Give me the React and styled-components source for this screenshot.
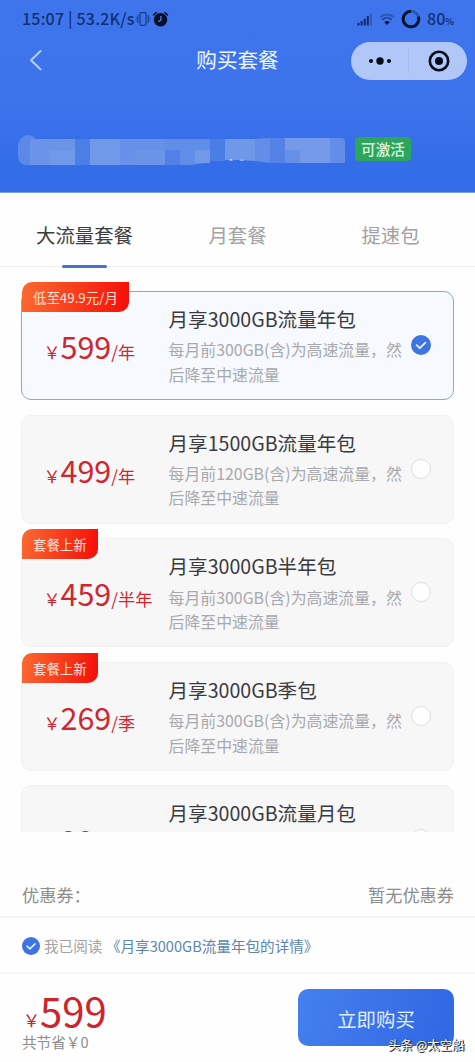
import React from "react";
import styled, { createGlobalStyle } from "styled-components";

const Global = createGlobalStyle`
  * { box-sizing: border-box; }
  body {
    margin: 0;
    background: #fefefe;
    font-family: "Noto Sans CJK SC", "Noto Sans", sans-serif;
  }
`;

const Page = styled.div`
  width: 475px;
  height: 1062px;
  overflow: hidden;
  display: flex;
  flex-direction: column;
  background: #fefefe;
`;

const Header = styled.header`
  height: 193px;
  flex: none;
  display: flex;
  flex-direction: column;
  background: linear-gradient(180deg, #3e75ec 0%, #3d74eb 50%, #346de8 85%, #336ce6 100%);
  border-bottom: 1px solid #7b9eea;
`;

const StatusBar = styled.div`
  height: 38px;
  padding: 0 21px 0 22px;
  display: flex;
  align-items: center;
  justify-content: space-between;
  color: #112f72;
`;

const StatusGroup = styled.div`
  display: flex;
  align-items: center;
  gap: ${(p) => p.$gap || 0}px;
`;

const StatusText = styled.span`
  font-size: 16px;
  font-weight: 500;
  line-height: 20px;
  margin-top: ${(p) => p.$lift || 0}px;
  letter-spacing: ${(p) => p.$track || 0}px;
  white-space: pre;
`;

const Percent = styled.small`
  font-size: 9px;
  font-weight: 700;
`;

const NavBar = styled.div`
  height: 45px;
  padding: 0 8px 0 28px;
  display: grid;
  grid-template-columns: 116px 1fr 116px;
  align-items: center;
`;

const NavTitle = styled.h1`
  margin: -3px 0 0 -20px;
  text-align: center;
  font-size: 20.6px;
  font-weight: 400;
  line-height: 30px;
  color: #f0f6ff;
`;

const Capsule = styled.div`
  width: 116px;
  height: 38px;
  border-radius: 19px;
  background: #b1c7f7;
  display: flex;
  align-items: center;
`;

const CapsuleHalf = styled.div`
  flex: 1;
  display: flex;
  justify-content: center;
  padding-left: ${(p) => p.$shift || 0}px;
`;

const CapsuleRule = styled.div`
  width: 1px;
  height: 25px;
  background: #a5bbee;
`;

const Account = styled.div`
  flex: 1;
  display: flex;
  align-items: flex-start;
  padding: 52px 0 0 17px;
`;

const StateTag = styled.span`
  margin: 2px 0 0 9px;
  width: 56px;
  height: 24px;
  border-radius: 4px;
  background: #2da65b;
  color: #d9f5e2;
  font-size: 14.6px;
  font-weight: 500;
  line-height: 24px;
  text-align: center;
`;

const Tabs = styled.nav`
  height: 74px;
  flex: none;
  padding: 0 8px;
  display: grid;
  grid-template-columns: repeat(3, 1fr);
  border-bottom: 1px solid #efefef;
`;

const Tab = styled.div`
  display: flex;
  flex-direction: column;
  align-items: center;
  justify-content: space-between;
  padding-top: 27px;
  font-size: 19.4px;
  line-height: 30px;
  color: ${(p) => (p.$active ? "#3c3c3c" : "#a2a2a2")};
  &::after {
    content: "";
    width: 45px;
    height: 3px;
    margin-bottom: -2px;
    border-radius: 2px;
    background: ${(p) => (p.$active ? "#4772c8" : "transparent")};
  }
`;

const PlanList = styled.main`
  height: 565px;
  flex: none;
  overflow: hidden;
  padding: 24px 21px 0 21px;
  display: flex;
  flex-direction: column;
  gap: 14.6px;
`;

const PlanCard = styled.section`
  position: relative;
  height: 109px;
  flex: none;
  border-radius: 10px;
  border: 1px solid ${(p) => (p.$selected ? "#8ba9ca" : "#f1f1f1")};
  background: ${(p) => (p.$selected ? "#f6f9fe" : "#f7f7f7")};
  display: grid;
  grid-template-columns: 146.5px 236px 1fr;
`;

const Ribbon = styled.span`
  position: absolute;
  top: -10px;
  left: 0;
  height: 30px;
  padding: 0 11px;
  border-radius: 10px 0 10px 0;
  background: linear-gradient(100deg, #fb6a31 0%, #f93c1c 50%, #f50c08 100%);
  color: #ffe3d8;
  font-size: 13.4px;
  line-height: 30px;
  white-space: nowrap;
`;

const Price = styled.div`
  display: flex;
  align-items: baseline;
  height: 44px;
  margin-top: 32px;
  padding-left: 21.5px;
  line-height: 44px;
  white-space: nowrap;
  color: #cf2731;
`;

const Currency = styled.span`
  font-size: 17px;
`;

const Amount = styled.span`
  font-size: ${(p) => p.$size || 30.5}px;
`;

const Period = styled.span`
  font-size: 17.2px;
`;

const Details = styled.div`
  padding-top: 12px;
`;

const PlanName = styled.h2`
  margin: 0;
  font-size: 19.6px;
  font-weight: 400;
  line-height: 30px;
  color: #3a3b3e;
  white-space: nowrap;
`;

const PlanNote = styled.p`
  margin: 4.4px 0 0;
  font-size: 15.9px;
  line-height: 24.5px;
  color: #a7a9ad;
`;

const Choice = styled.div`
  padding: 43px 0 0 6.5px;
  line-height: 0;
`;

const EmptyRadio = styled.div`
  width: 20px;
  height: 20px;
  border-radius: 50%;
  border: 1.5px solid #dedede;
  background: #fefefe;
`;

const CouponRow = styled.div`
  height: 86px;
  flex: none;
  padding: 49px 21px 0 22px;
  display: flex;
  justify-content: space-between;
  font-size: 17.2px;
  line-height: 28px;
  color: #8c8c8c;
  border-bottom: 2px solid #f4f4f4;
`;

const Agreement = styled.div`
  height: 56px;
  flex: none;
  padding: 2px 0 0 21.5px;
  display: flex;
  align-items: center;
  font-size: 14.6px;
  line-height: 22px;
  color: #a3a3a3;
  border-bottom: 2px solid #f6f6f6;
`;

const AgreementText = styled.span`
  margin: 0 3.5px 0 4.5px;
`;

const AgreementLink = styled.a`
  color: #5a86b3;
`;

const Checkout = styled.footer`
  flex: 1;
  padding: 15px 21px 0 22px;
  display: flex;
  justify-content: space-between;
  align-items: flex-start;
`;

const Total = styled.div`
  display: flex;
  flex-direction: column;
`;

const TotalPrice = styled.div`
  display: flex;
  align-items: baseline;
  height: 44px;
  line-height: 44px;
  margin-top: -1px;
  padding-left: 1px;
  color: #d0232b;
`;

const Saving = styled.div`
  font-size: 14.6px;
  line-height: 20px;
  color: #8c8c8c;
`;

const BuyButton = styled.button`
  position: relative;
  width: 156px;
  height: 57px;
  border: 0;
  padding: 1px 0 0;
  border-radius: 10px;
  background: linear-gradient(105deg, #4480ee 0%, #3b73e8 50%, #3067e3 100%);
  color: #e3efff;
  font-family: inherit;
  font-size: 19.4px;
`;

const Watermark = styled.span`
  position: absolute;
  top: 46px;
  left: 90px;
  font-size: 12.4px;
  line-height: 20px;
  white-space: nowrap;
  color: #fff;
  text-shadow: 1px 1px 0 #222, 1px 0 1px #333;
`;

const CheckMark = ({ size }) => (
  <svg width={size} height={size} viewBox="0 0 20 20">
    <circle cx="10" cy="10" r="10" fill="#3d74e2" />
    <path d="M5.6 10.2l3.2 3 5.6-5.6" fill="none" stroke="#e6f0ff" strokeWidth="1.8" strokeLinecap="round" strokeLinejoin="round" />
  </svg>
);

const VibrateIcon = () => (
  <svg width="16" height="16" viewBox="0 0 16 16" fill="none" stroke="#173a87">
    <rect x="5" y="1.7" width="6" height="12.6" rx="1.2" strokeWidth="1.2" />
    <path d="M2.8 4v8M13.3 4v8" strokeWidth="1.1" />
    <path d="M1.2 6v4M15 6v4" strokeWidth=".8" opacity=".6" />
  </svg>
);

const AlarmIcon = () => (
  <svg width="18" height="16" viewBox="-1 0 17 16">
    <circle cx="8" cy="8.7" r="6.8" fill="#07102a" />
    <path d="M1 4L3.6 1.6M15 4L12.4 1.6" stroke="#07102a" strokeWidth="1.5" strokeLinecap="round" />
    <path d="M8.4 5v4.2L5.8 10.6" fill="none" stroke="#5b83d8" strokeWidth="1.3" />
  </svg>
);

const SignalIcon = () => (
  <svg width="16" height="13" viewBox="0 0 16 13" fill="#112b66">
    <rect x="0.5" y="9.9" width="2" height="2.6" />
    <rect x="3.6" y="8" width="2" height="4.5" />
    <rect x="6.7" y="5.8" width="2" height="6.7" />
    <rect x="9.8" y="3" width="2" height="9.5" />
    <rect x="12.9" y="0.6" width="1.8" height="11.9" fill="#2b58b8" />
  </svg>
);

const WifiIcon = () => (
  <svg width="16" height="13" viewBox="0 0 16 13" fill="none">
    <path d="M1 4.4c4-3.9 10-3.9 14 0" stroke="#2b58b8" strokeWidth="1.8" />
    <path d="M3.3 6.8c2.8-2.5 6.6-2.5 9.4 0" stroke="#1c4396" strokeWidth="1.7" />
    <path d="M8 12L5.2 9.1c1.6-1.4 4-1.4 5.6 0z" fill="#0a1a48" />
  </svg>
);

const BatteryRing = () => (
  <svg width="20" height="20" viewBox="0 0 20 20" fill="none">
    <circle cx="10" cy="10" r="7.8" stroke="#2459b4" strokeWidth="2.8" />
    <path d="M10 2.2A7.8 7.8 0 1 0 17.4 7.6" stroke="#07122f" strokeWidth="3" />
  </svg>
);

const BackIcon = () => (
  <svg width="16" height="22" viewBox="0 0 16 22" fill="none">
    <path d="M12.6 1L3 10.2l9.6 9.2" stroke="#b8d3fb" strokeWidth="1.9" strokeLinecap="round" strokeLinejoin="round" />
  </svg>
);

const MoreIcon = () => (
  <svg width="24" height="8" viewBox="0 0 24 8" fill="#060b18">
    <circle cx="3" cy="4" r="2" />
    <circle cx="12" cy="4" r="3.7" />
    <circle cx="21" cy="4" r="2" />
  </svg>
);

const CloseIcon = () => (
  <svg width="22" height="22" viewBox="0 0 22 22">
    <circle cx="11" cy="11" r="9.2" fill="none" stroke="#060b18" strokeWidth="2.6" />
    <circle cx="11" cy="11" r="4" fill="#060b18" />
  </svg>
);

const MaskedNumber = () => (
  <svg width="329" height="31" viewBox="0 0 329 31" fill="#6f97e8">
    <path d="M1 12C1 5 6 0 11 0c3 0 6 1 7 4h10v26H8C3 29 1 25 1 20z" fill="#5c89e8" />
    <rect x="13" y="4" width="45" height="26" fill="#6b94e9" />
    <rect x="32" y="15" width="26" height="15" fill="#7099e9" />
    <rect x="58" y="4" width="15" height="26" fill="#4c7ee8" />
    <rect x="73" y="4" width="30" height="26" fill="#7199e9" />
    <rect x="103" y="4" width="45" height="26" fill="#6790e8" />
    <rect x="118" y="15" width="30" height="15" fill="#6b94e8" />
    <path d="M148 4h45v23l-18 3h-27z" fill="#608de8" />
    <rect x="148" y="15" width="15" height="15" fill="#5280e6" />
    <rect x="178" y="15" width="15" height="13" fill="#7199e9" />
    <rect x="193" y="4" width="15" height="22" fill="#4b7de7" />
    <path d="M208 4h30v22l-15-1h-15z" fill="#7098e8" />
    <path d="M238 4l15-1v25l-15-2z" fill="#638ee8" />
    <rect x="253" y="3" width="15" height="25" fill="#5482e6" />
    <rect x="268" y="3" width="45" height="25" fill="#749ae9" />
    <rect x="268" y="15" width="15" height="13" fill="#668fe7" />
    <path d="M313 3h11q4 0 4 4v21h-15z" fill="#638de7" />
    <path d="M212 25.5l2-1.6 2 1.6zM222 25.5l3-1 2 1z" fill="#e6f2ff" />
  </svg>
);

const plans = [
  { name: "月享3000GB流量年包", price: "599", period: "/年", quota: "300GB", ribbon: "低至49.9元/月", selected: true },
  { name: "月享1500GB流量年包", price: "499", period: "/年", quota: "120GB" },
  { name: "月享3000GB半年包", price: "459", period: "/半年", quota: "300GB", ribbon: "套餐上新" },
  { name: "月享3000GB季包", price: "269", period: "/季", quota: "300GB", ribbon: "套餐上新" },
  { name: "月享3000GB流量月包", price: "99" },
];

const Plan = ({ plan }) => (
  <PlanCard $selected={plan.selected}>
    {plan.ribbon && <Ribbon>{plan.ribbon}</Ribbon>}
    <Price>
      <Currency>￥</Currency>
      <Amount>{plan.price}</Amount>
      {plan.period && <Period>{plan.period}</Period>}
    </Price>
    <Details>
      <PlanName>{plan.name}</PlanName>
      {plan.quota && <PlanNote>{`每月前${plan.quota}(含)为高速流量，然后降至中速流量`}</PlanNote>}
    </Details>
    <Choice>{plan.selected ? <CheckMark size={20} /> : <EmptyRadio />}</Choice>
  </PlanCard>
);

export default function App() {
  return (
    <Page>
      <Global />
      <Header>
        <StatusBar>
          <StatusGroup>
            <StatusText $track={0.2} $lift={-2}>15:07 | 53.2K/s</StatusText>
            <VibrateIcon />
            <AlarmIcon />
          </StatusGroup>
          <StatusGroup $gap={6}>
            <SignalIcon />
            <WifiIcon />
            <BatteryRing />
            <StatusText $lift={1}>80<Percent>%</Percent></StatusText>
          </StatusGroup>
        </StatusBar>
        <NavBar>
          <BackIcon />
          <NavTitle>购买套餐</NavTitle>
          <Capsule>
            <CapsuleHalf $shift={1}><MoreIcon /></CapsuleHalf>
            <CapsuleRule />
            <CapsuleHalf $shift={2}><CloseIcon /></CapsuleHalf>
          </Capsule>
        </NavBar>
        <Account>
          <MaskedNumber />
          <StateTag>可激活</StateTag>
        </Account>
      </Header>
      <Tabs>
        <Tab $active>大流量套餐</Tab>
        <Tab>月套餐</Tab>
        <Tab>提速包</Tab>
      </Tabs>
      <PlanList>
        {plans.map((plan) => (
          <Plan key={plan.name} plan={plan} />
        ))}
      </PlanList>
      <CouponRow>
        <span>优惠券：</span>
        <span>暂无优惠券</span>
      </CouponRow>
      <Agreement>
        <CheckMark size={18} />
        <AgreementText>我已阅读</AgreementText>
        <AgreementLink>《月享3000GB流量年包的详情》</AgreementLink>
      </Agreement>
      <Checkout>
        <Total>
          <TotalPrice>
            <Currency>￥</Currency>
            <Amount $size={40}>599</Amount>
          </TotalPrice>
          <Saving>共节省￥0</Saving>
        </Total>
        <BuyButton>
          立即购买
          <Watermark>头条 @太空船</Watermark>
        </BuyButton>
      </Checkout>
    </Page>
  );
}
